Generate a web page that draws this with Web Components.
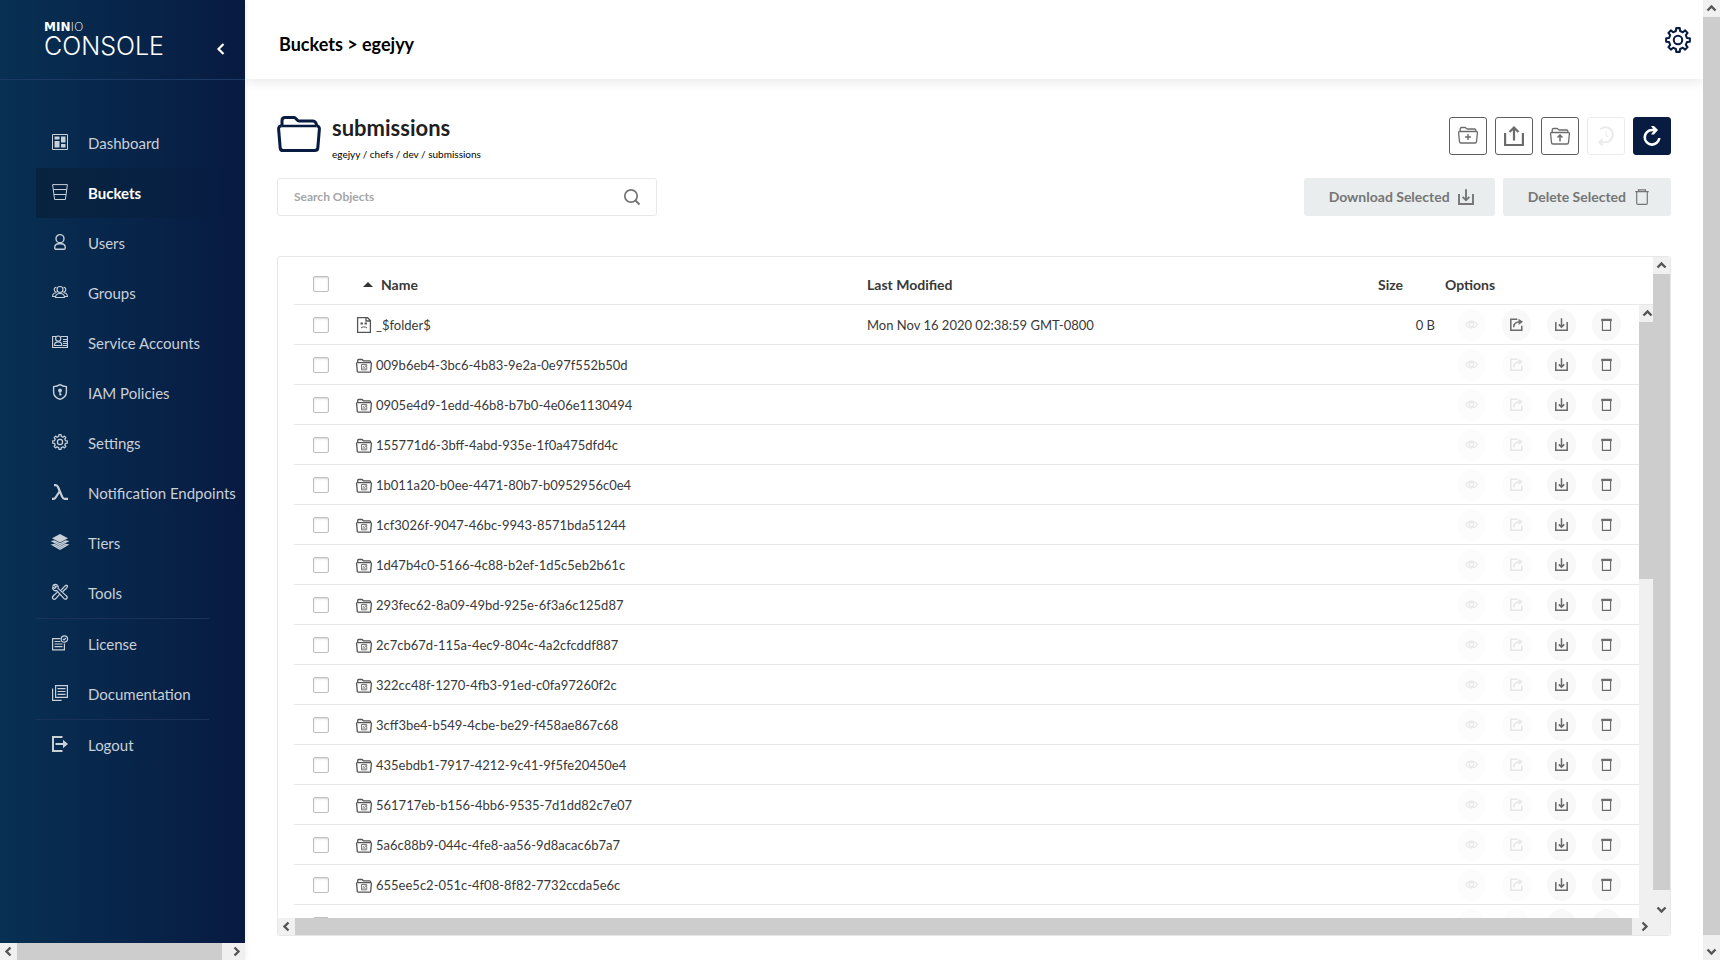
<!DOCTYPE html>
<html lang="en">
<head>
<meta charset="utf-8">
<title>MinIO Console</title>
<style>
html, body { height: 100%; margin: 0; }
body { font-family: Lato, "Open Sans", sans-serif; color: #1f1f1f; background: #fff; overflow: hidden; }
</style>
</head>
<body>
<console-app></console-app>

<script>
const ICONS = {
  dashboard: '<path fill="none" stroke="currentColor" d="M.5.5h15v15H.5z"/><path fill="currentColor" d="M2.500 2.500h5v3h-5zM9 2.500h4.500v6H9zM2.500 7h5v6.500h-5zM9 10h4.500v3.500H9z"/>',
  bucket: '<g fill="none" stroke="currentColor"><path d="M.6.6h14.800l-2 14.900H2.600z"/><path d="M1.400 5.500h13.200M2 10.500h12"/></g>',
  user: '<g fill="none" stroke="currentColor" stroke-width="1.400"><ellipse cx="8" cy="4.700" rx="4" ry="4.100"/><path d="M2.700 13.700c0-2.600 2-4 4.300-4h2c2.300 0 4.300 1.400 4.300 4 0 1.200-.7 1.600-1.500 1.600H4.200c-.8 0-1.500-.4-1.500-1.600z"/></g>',
  groups: '<g fill="none" stroke="currentColor" stroke-width="1.150"><circle cx="8" cy="5.500" r="3"/><path d="M3.500 13.500c0-2.500 2-4 4.500-4s4.500 1.500 4.500 4z"/><path d="M4.500 3.200A2.300 2.300 0 1 0 4.800 8M11.500 3.200A2.300 2.300 0 1 1 11.200 8M3.500 12.500H.6C.6 10 2 8.800 4.400 8.700M12.500 12.500h2.900c0-2.500-1.400-3.700-3.800-3.800"/></g>',
  card: '<g fill="none" stroke="currentColor" stroke-width="1.150"><path d="M4 2.500H.6v11h14.800v-11H9"/><circle cx="6.200" cy="4.600" r="2.600"/><path d="M2.500 11.500c0-2.500 1.500-3.700 3.700-3.700s3.700 1.200 3.700 3.700z"/><path d="M11 5.500h4M11 7.500h4M11 9.500h4M11 11.500h4"/></g>',
  shield: '<path fill="none" stroke="currentColor" stroke-width="1.400" d="M8 .7c2 1.300 4.300 1.800 6.400 1.900v5.300c0 3.800-2.900 6.300-6.400 7.400-3.500-1.100-6.400-3.600-6.400-7.400V2.600C3.700 2.500 6 2 8 .7z"/><circle cx="8" cy="6.400" r="1.900" fill="currentColor"/><path stroke="currentColor" stroke-width="1.400" d="M8 6.500v5M8 10.500h1.500"/>',
  gear: '<g fill="none" stroke="currentColor" stroke-width="1.250" stroke-linejoin="round"><path d="M6.700 2.500 6.900.7h2.200l.2 1.800 1.700.7 1.400-1.100 1.500 1.500-1.100 1.400.7 1.700 1.800.2v2.200l-1.800.2-.7 1.700 1.100 1.400-1.500 1.500-1.400-1.100-1.700.7-.2 1.800H6.900l-.2-1.800-1.700-.7-1.400 1.100-1.500-1.500L3.200 11l-.7-1.700-1.800-.2V6.900l1.800-.2L3.200 5 2.100 3.600l1.500-1.500L5 3.200z"/><circle cx="8" cy="8" r="2.600"/></g>',
  lambda: '<path fill="none" stroke="currentColor" stroke-width="2.200" d="M2 1.200h1.600c1.300 0 1.900.6 2.500 2l4 9.400c.6 1.500 1.200 2.200 2.500 2.200H16M7.800 7.200 3.600 13.500c-.6 1-1.300 1.300-2.300 1.300H0"/>',
  tiers: '<path fill="currentColor" d="m8 0 8 4.200-8 4.300-8-4.300z"/><path fill="none" stroke="currentColor" stroke-width="1.300" d="m.4 7.300 2.100-.4L8 9.800l5.500-2.900 2.100.4L8 11.600zM.4 10.900l2.100-.4L8 13.400l5.500-2.900 2.100.4L8 15.200z"/>',
  tools: '<g fill="none" stroke="currentColor" stroke-width="1.250"><path d="M1.200 1.200c1.400-1 3.300-.9 4.300.3.800.9.900 1.900.6 2.900l7.900 7.200c1.200 1 1.500 2 .8 2.900-.9 1-2.200.8-3-.2L4.700 6.500C3.400 7 2.100 6.600 1.300 5.600.6 4.800.4 3.800.8 2.900l1.900 1.600 1.600-1.800z"/><path d="m9.200 6.200 2.900-3.400c1-1.200 2.300-2 3-1.300.7.800 0 2.100-1 3l-3.500 3.300M5.400 8.100l-4 3.700c-1.100 1.100-1.200 2.200-.4 3 .9.800 2 .7 3-.4l3.800-4.300"/></g>',
  license: '<g fill="none" stroke="currentColor" stroke-width="1.200"><path d="M8.500 3.600H.6v11.200h11.800V8.500"/><circle cx="12.400" cy="4" r="3.200"/><path d="m11 4 1 1 1.900-2M2.500 6.500h6M2.500 9h8M2.500 11.700h8"/></g>',
  docs: '<g fill="none" stroke="currentColor" stroke-width="1.200"><path d="M3.600.6h11.800v11.800H3.600z"/><path d="M.6 3.500v11.900h9M5.500 3.700h8M5.500 6.500h8M5.500 9.300h8"/></g>',
  logout: '<path fill="none" stroke="currentColor" stroke-width="2" d="M10.500 1H1v14h9.500M3.500 8H13"/><path fill="currentColor" d="M11 3.800 16 8l-5 4.200z"/>',
  chevron: '<path fill="none" stroke="currentColor" stroke-width="2.200" d="m10.500 3-5 5 5 5"/>',
  folder: '<g fill="none" stroke="currentColor" stroke-width="3" stroke-linejoin="round"><path d="M5 10V4.500c0-2 1-3 3-3h9c2 0 3 3.500 5 3.500h14c2 0 3.500 2 3.500 5"/><path stroke-width="2.500" d="M4.500 10h35"/><path d="M4.500 10C2.500 10 1.500 11 1.600 13l1.600 19c.2 2 1 2.500 3 2.500h31.600c2 0 2.800-.5 3-2.500l1.600-19c.1-2-.9-3-2.900-3"/></g>',
  search: '<g fill="none" stroke="currentColor" stroke-width="1.700"><circle cx="7" cy="7" r="6.200"/><path stroke-width="1.900" d="m11.500 11.500 4 4"/></g>',
  folderNew: '<g fill="none" stroke="currentColor" stroke-width="1.300"><path d="M2.200 5.500V3c0-1 .5-1.500 1.400-1.500H7c1 0 1.100 1.500 2.200 1.500h7.200c1 0 1.500.5 1.500 1.500v1"/><path d="M1.800 5.500h16.400c1 0 1.300.5 1.200 1.400l-.9 8.700c-.1 1-.6 1.400-1.500 1.400H3c-.9 0-1.400-.4-1.500-1.400L.6 6.900c-.1-.9.2-1.400 1.200-1.400z"/><path d="M10 8v6M7 11h6" stroke-width="1.400"/></g>',
  upload: '<path fill="none" stroke="currentColor" stroke-width="2.200" d="M1.100 7v12h17.800V7M10 14.500V2M5.500 6 10 1.600 14.500 6"/>',
  folderUp: '<g fill="none" stroke="currentColor" stroke-width="1.300"><path d="M2.200 6.500V4c0-1 .5-1.500 1.400-1.500H7c1 0 1.100 1.500 2.200 1.500h7.200c1 0 1.500.5 1.500 1.500v1"/><path d="M1.800 6.500h16.400c1 0 1.300.5 1.200 1.400l-.9 8.700c-.1 1-.6 1.400-1.500 1.400H3c-.9 0-1.400-.4-1.500-1.400L.6 7.900c-.1-.9.2-1.400 1.200-1.400z"/><path d="M10 15.500V9M7.500 11.500 10 9l2.500 2.500" stroke-width="1.500"/></g>',
  history: '<g fill="none" stroke="currentColor" stroke-width="2"><path d="M4 3.500A7.500 7.500 0 1 1 9 16.200H3.500"/><path d="m6.500 13-3.200 3.200 3.200 3"/><path stroke-width="1.200" d="M10 5v4.500l2 1.300"/></g>',
  refresh: '<path fill="none" stroke="currentColor" stroke-width="2.600" d="M12 4H10a7.300 7.300 0 1 0 7.300 8"/><path fill="currentColor" d="M9 0h3l4 4-4 4.500H9L12 4z"/>',
  download: '<path fill="none" stroke="currentColor" stroke-width="1.900" d="M1 5v10h14V5M8 .3v11M4.600 7.800 8 11.200l3.400-3.400"/>',
  trash: '<g fill="none" stroke="currentColor" stroke-width="1.200"><path d="M1.300 2.700h13.400M4.500 2.500V.8h7v1.700"/><path d="M2.700 2.700v11.600c0 .7.500 1.100 1.200 1.100h8.200c.7 0 1.200-.4 1.200-1.100V2.700"/></g>',
  trashSmall: '<path fill="none" stroke="currentColor" stroke-width="1.400" d="M3 3.500v11.700h10V3.500"/><path fill="currentColor" d="M1.500 1h13v3h-1.800V3.700H3.300V4H1.500z"/>',
  share: '<path fill="none" stroke="currentColor" stroke-width="1.900" d="M9 1.500H1V15h13.500V9.500M4.500 11.500c0-4 3-6.700 8-6.800"/><path fill="currentColor" d="M10.500.8 16 4.700l-5.500 4z"/>',
  eye: '<g fill="none" stroke="currentColor" stroke-width="1.300"><path d="M.6 8C4.500 2.500 11.500 2.500 15.400 8 11.500 13.500 4.500 13.500.6 8z"/><circle cx="8" cy="8" r="2.700"/></g>',
  fileObj: '<g fill="none" stroke="currentColor" stroke-width="1.300"><path d="M1.600.7h10l2.800 2.800v11.800H1.600zM10 .7V4h4"/><path d="M5 11c1-1.500 4.500-1.500 6 0" stroke-width="1"/></g><path fill="currentColor" d="M4.500 5.500h2.400v2H4.500zM8.500 5.500h2.400v2H8.500z"/>',
  folderObj: '<g fill="none" stroke="currentColor"><path stroke-width="1.300" d="M1.700 5.800V3.300c0-.5.300-.8.800-.8h3.600l1.300 1.300h6.100c.6 0 1 .3 1 .9v1.100M1.300 5.700h13.400c.6 0 .8.400.7.900l-.7 7.600c0 .6-.3.900-.9.900H2.200c-.6 0-.9-.3-.9-.9L.6 6.600c-.1-.5.100-.9.700-.9z"/><path d="M5.500 7.500h5.200v5.300H5.500zM7 9l2.500 3M9.300 8.500V10M7 10.500V12" stroke-width=".8"/></g>'
};

class BaseElement extends HTMLElement {
  render(markup) {
    if (!this.shadowRoot) this.attachShadow({ mode: 'open' });
    this.shadowRoot.innerHTML = markup;
  }
}

/* One glyph from the icon set; width and height come from attributes. */
class UiIcon extends BaseElement {
  connectedCallback() {
    const w = this.getAttribute('w') || 16;
    const h = this.getAttribute('h') || w;
    const box = this.getAttribute('box') || '0 0 16 16';
    this.render(`<style>:host{display:inline-block;width:${w}px;height:${h}px;flex:none}svg{display:block;width:100%;height:100%;overflow:visible}</style>
      <svg viewBox="${box}" aria-hidden="true">${ICONS[this.getAttribute('name')] || ''}</svg>`);
  }
}

/* Scroll bar strip: dir = v | h, thumb and rest are proportional shares. */
class ScrollStrip extends BaseElement {
  connectedCallback() {
    const h = this.getAttribute('dir') === 'h';
    const arrow = d => `<svg viewBox="0 0 17 17" width="17" height="17"><path d="${d}" fill="none" stroke="#555" stroke-width="2.400"/></svg>`;
    const start = h ? 'M10.500 4.500l-4 4 4 4' : 'M4.500 10.500l4-4 4 4';
    const end = h ? 'M6.500 4.500l4 4-4 4' : 'M4.500 6.500l4 4 4-4';
    this.render(`<style>
      :host{display:flex;flex-direction:${h ? 'row' : 'column'};background:#f0f0f0;overflow:hidden;min-width:0;min-height:0}
      .arrow{flex:none;${h ? 'width' : 'height'}:17px;display:flex;align-items:center;justify-content:center}
      .arrow svg{flex:none}
      .thumb{flex:${this.getAttribute('thumb')} 1 0;background:#cdcdcd}
      .rest{flex:${this.getAttribute('rest')} 1 0}
    </style><div class="arrow">${arrow(start)}</div><div class="thumb"></div><div class="rest"></div>
    ${this.hasAttribute('no-end') ? '' : `<div class="arrow">${arrow(end)}</div>`}`);
  }
}

class NavItem extends BaseElement {
  connectedCallback() {
    this.render(`<style>
      :host{display:block}
      a{display:flex;align-items:center;height:50px;padding-left:16px;gap:20px;color:#c9d0d8;text-decoration:none;font-size:15px;white-space:nowrap}
      ui-icon{margin:0 0 2px}
      :host([active]) a{background:linear-gradient(90deg,rgba(6,28,50,.6),rgba(6,28,50,0));color:#fff;font-weight:700}
      :host([active]) ui-icon{color:#c9d0d8}
    </style><a href="#"${this.hasAttribute('active') ? ' aria-current="page"' : ''}><ui-icon name="${this.getAttribute('icon')}"></ui-icon><span><slot></slot></span></a>`);
  }
}

class ConsoleSidebar extends BaseElement {
  connectedCallback() {
    this.render(`<style>
      :host{display:flex;flex-direction:column;min-height:0;background:linear-gradient(90deg,#073052,#081a42);box-shadow:0 0 6px rgba(0,0,0,.08);z-index:2}
      header{display:flex;align-items:flex-start;height:79px;border-bottom:1px solid #1c3a63;color:#fff}
      .logo{flex:1;padding:21px 0 0 44px;line-height:1}
      .minio{display:block;font:700 12px/12px "DejaVu Sans",sans-serif}
      .minio span{font-weight:200}
      .console{display:block;font:300 25px/26px Inter,sans-serif}
      button{margin:41px 16px 0 0;padding:0;border:0;background:none;color:#fff;display:flex}
      nav{flex:1;min-height:0;overflow:hidden;padding:38px 0 0 36px}
      hr{height:1px;border:0;margin:0 36px 0 0;background:#1c3158}
      scroll-strip{height:17px}
    </style>
    <header><div class="logo"><span class="minio">MIN<span>IO</span></span><span class="console">CONSOLE</span></div>
      <button aria-label="Collapse menu"><ui-icon name="chevron"></ui-icon></button></header>
    <nav>
      <nav-item icon="dashboard">Dashboard</nav-item>
      <nav-item icon="bucket" active>Buckets</nav-item>
      <nav-item icon="user">Users</nav-item>
      <nav-item icon="groups">Groups</nav-item>
      <nav-item icon="card">Service Accounts</nav-item>
      <nav-item icon="shield">IAM Policies</nav-item>
      <nav-item icon="gear">Settings</nav-item>
      <nav-item icon="lambda">Notification Endpoints</nav-item>
      <nav-item icon="tiers">Tiers</nav-item>
      <nav-item icon="tools">Tools</nav-item>
      <hr>
      <nav-item icon="license">License</nav-item>
      <nav-item icon="docs">Documentation</nav-item>
      <hr>
      <nav-item icon="logout">Logout</nav-item>
    </nav>
    <scroll-strip dir="h" thumb="205" rest="6"></scroll-strip>`);
  }
}

class PageHeader extends BaseElement {
  connectedCallback() {
    this.render(`<style>
      :host{display:flex;align-items:center;justify-content:space-between;height:79px;padding:0 12px 0 34px;background:#fff;box-shadow:0 2px 12px rgba(0,0,0,.1)}
      h1{margin:8px 0 0;font-size:18px;line-height:24px;font-weight:700;color:#000}
      button{border:0;padding:0;background:none;color:#081c42;display:flex}
    </style><h1><slot></slot></h1><button aria-label="Settings"><ui-icon name="gear" w="26"></ui-icon></button>`);
  }
}

class SquareButton extends BaseElement {
  connectedCallback() {
    this.render(`<style>
      :host{display:block}
      button{width:38px;height:38px;padding:0;display:flex;align-items:center;justify-content:center;background:#fff;border:1px solid #5e5e5e;border-radius:3px;color:#6b6b6b}
      button:disabled{border-color:#ebebeb;color:#ebebeb}
      :host([primary]) button{background:#081c42;border-color:#081c42;color:#fff}
    </style><button aria-label="${this.getAttribute('label')}"${this.hasAttribute('disabled') ? ' disabled' : ''}><ui-icon name="${this.getAttribute('icon')}" w="20" box="0 0 20 20"></ui-icon></button>`);
  }
}

class BulkButton extends BaseElement {
  connectedCallback() {
    this.render(`<style>
      :host{display:block}
      button{height:38px;padding:0 21px 0 25px;display:flex;align-items:center;gap:8px;background:#e9edee;border:0;border-radius:3px;color:#767676;font:700 14px/20px Lato,sans-serif}
    </style><button disabled><span><slot></slot></span><ui-icon name="${this.getAttribute('icon')}"></ui-icon></button>`);
  }
}

class SearchBox extends BaseElement {
  connectedCallback() {
    this.render(`<style>
      :host{display:flex;align-items:center;width:380px;height:38px;box-sizing:border-box;border:1px solid #e6e8e8;border-radius:3px;padding:0 16px;color:#757575}
      input{flex:1;min-width:0;border:0;outline:0;padding:0;background:none;font:700 12px/16px Lato,sans-serif}
      input::placeholder{color:#a5a5a5;opacity:1}
    </style><input type="text" aria-label="Search Objects" placeholder="Search Objects"><ui-icon name="search"></ui-icon>`);
  }
}

class ObjectTable extends BaseElement {
  connectedCallback() {
    const folders = ['009b6eb4-3bc6-4b83-9e2a-0e97f552b50d', '0905e4d9-1edd-46b8-b7b0-4e06e1130494',
      '155771d6-3bff-4abd-935e-1f0a475dfd4c', '1b011a20-b0ee-4471-80b7-b0952956c0e4',
      '1cf3026f-9047-46bc-9943-8571bda51244', '1d47b4c0-5166-4c88-b2ef-1d5c5eb2b61c',
      '293fec62-8a09-49bd-925e-6f3a6c125d87', '2c7cb67d-115a-4ec9-804c-4a2cfcddf887',
      '322cc48f-1270-4fb3-91ed-c0fa97260f2c', '3cff3be4-b549-4cbe-be29-f458ae867c68',
      '435ebdb1-7917-4212-9c41-9f5fe20450e4', '561717eb-b156-4bb6-9535-7d1dd82c7e07',
      '5a6c88b9-044c-4fe8-aa56-9d8acac6b7a7', '655ee5c2-051c-4f08-8f82-7732ccda5e6c', ''];
    const objects = [{ name: '_$folder$', icon: 'fileObj', date: 'Mon Nov 16 2020 02:38:59 GMT-0800', size: '0 B', share: true },
      ...folders.map(name => ({ name, icon: 'folderObj', date: '', size: '' }))];
    const action = (icon, label, on) => `<button aria-label="${label}"${on ? '' : ' disabled'}><ui-icon name="${icon}" w="13"></ui-icon></button>`;
    const rows = objects.map(o => `<tr>
      <td class="pick"><input type="checkbox" aria-label="Select ${o.name || 'object'}"></td>
      <td><div class="name"><ui-icon name="${o.icon}"></ui-icon><span>${o.name}</span></div></td>
      <td>${o.date}</td><td class="size">${o.size}</td>
      <td class="options"><div>${action('eye', 'Preview', false)}${action('share', 'Share', o.share)}${action('download', 'Download', true)}${action('trashSmall', 'Delete', true)}</div></td></tr>`).join('');
    this.render(`<style>
      :host{display:grid;grid-template:minmax(0,1fr) 17px / minmax(0,1fr) 17px;border:1px solid #e6e8e8;border-radius:3px;min-height:0;overflow:hidden}
      .view{display:grid;grid-template:minmax(0,1fr) / minmax(0,1fr);overflow:hidden;padding-left:16px}
      table,.inner{grid-area:1 / 1}
      table{align-self:start;width:100%;table-layout:fixed;border-collapse:separate;border-spacing:0;font-size:13px;color:#393939}
      .inner{justify-self:end;width:17px;margin:48px -3px 0 0}
      .bottom{grid-area:2 / 1 / 3 / 3;padding-right:17px}
      th,td{padding:0;text-align:left;border-bottom:1px solid #e8e8e8;box-sizing:border-box;white-space:nowrap}
      th{height:48px;padding-top:8px;font-size:14px;font-weight:700}
      th.pick{padding-top:6px}
      td{height:40px}
      .c-pick{width:62px}.c-size{width:67px}.c-options{width:208px}
      .pick{padding-left:19px}
      .sort{display:flex;align-items:center;gap:8px;padding-left:7px}
      .sort i{border:5px solid transparent;border-top:0;border-bottom:5px solid #333}
      input{appearance:none;display:block;margin:0;width:16px;height:16px;border:1px solid #bfbfbf;border-radius:2px;background:#fff;box-shadow:inset 0 1px 2px rgba(0,0,0,.15)}
      .name{display:flex;align-items:center;gap:4px}
      .name ui-icon{color:#555}
      .size{text-align:right;padding-right:10px}
      .options div{display:flex;gap:16px;padding-left:12px}
      button{width:29px;height:32px;padding:0;border:0;border-radius:50%;background:#f8f8f8;color:#6b6b6b;display:flex;align-items:center;justify-content:center}
      button:disabled{background:#fcfcfc;color:#e6e6e6}
    </style>
    <div class="view">
      <table>
        <colgroup><col class="c-pick"><col><col><col class="c-size"><col class="c-options"></colgroup>
        <thead><tr><th class="pick"><input type="checkbox" aria-label="Select all"></th>
          <th><div class="sort"><i></i>Name</div></th><th>Last Modified</th><th>Size</th><th>Options</th></tr></thead>
        <tbody>${rows}</tbody>
      </table>
      <scroll-strip class="inner" dir="v" thumb="257" rest="339" no-end></scroll-strip>
    </div>
    <scroll-strip dir="v" thumb="616" rest="11"></scroll-strip>
    <scroll-strip class="bottom" dir="h" thumb="1337" rest="4"></scroll-strip>`);
  }
}

class ObjectBrowser extends BaseElement {
  connectedCallback() {
    this.render(`<style>
      :host{display:flex;flex-direction:column;min-height:0;padding:37px 32px 24px}
      .head{display:flex;align-items:flex-start;height:62px}
      .title{flex:1;padding-left:11px}
      h2{margin:0;font-size:22px;line-height:24px;font-weight:700}
      p{margin:8px 0 0;font-size:10px;line-height:12px;color:#000}
      .actions,.tools{display:flex;gap:8px}
      .actions{padding-top:1px}
      .tools{margin-bottom:40px}
      search-box{margin-right:auto}
      .head > ui-icon{color:#081c42}
      object-table{flex:1}
    </style>
    <div class="head">
      <ui-icon name="folder" w="44" h="36" box="0 0 44 36"></ui-icon>
      <div class="title"><h2>submissions</h2><p>egejyy / chefs / dev / submissions</p></div>
      <div class="actions">
        <square-button icon="folderNew" label="Create path"></square-button>
        <square-button icon="upload" label="Upload file"></square-button>
        <square-button icon="folderUp" label="Upload folder"></square-button>
        <square-button icon="history" label="Rewind" disabled></square-button>
        <square-button icon="refresh" label="Refresh" primary></square-button>
      </div>
    </div>
    <div class="tools"><search-box></search-box>
      <bulk-button icon="download">Download Selected</bulk-button>
      <bulk-button icon="trash">Delete Selected</bulk-button></div>
    <object-table></object-table>`);
  }
}

class ConsoleApp extends BaseElement {
  connectedCallback() {
    this.render(`<style>
      :host{display:grid;grid-template-columns:245px minmax(0,1fr) 17px;height:100vh}
      main{display:grid;grid-template-rows:79px minmax(0,1fr);min-height:0}
    </style>
    <console-sidebar></console-sidebar>
    <main><page-header>Buckets &gt; egejyy</page-header><object-browser></object-browser></main>
    <scroll-strip dir="v" thumb="918" rest="8"></scroll-strip>`);
  }
}

customElements.define('ui-icon', UiIcon);
customElements.define('scroll-strip', ScrollStrip);
customElements.define('nav-item', NavItem);
customElements.define('console-sidebar', ConsoleSidebar);
customElements.define('page-header', PageHeader);
customElements.define('square-button', SquareButton);
customElements.define('bulk-button', BulkButton);
customElements.define('search-box', SearchBox);
customElements.define('object-table', ObjectTable);
customElements.define('object-browser', ObjectBrowser);
customElements.define('console-app', ConsoleApp);
</script>
</body>
</html>
